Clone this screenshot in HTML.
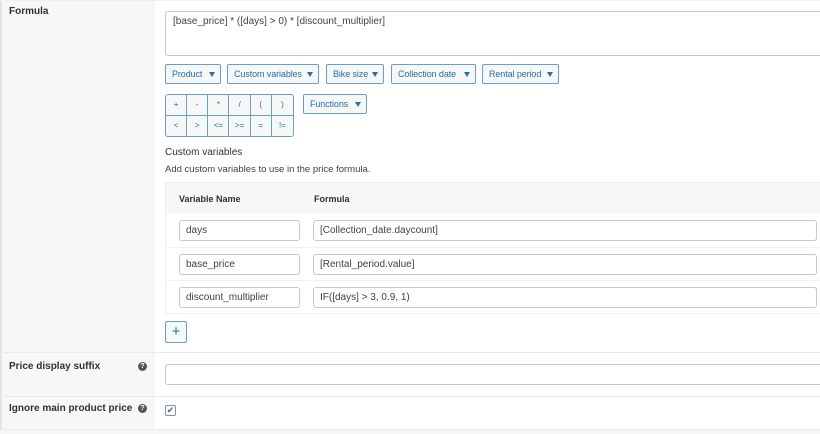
<!DOCTYPE html>
<html><head><style>
*{box-sizing:border-box;margin:0;padding:0}
body{width:820px;height:434px;overflow:hidden;background:#fff;font-family:"Liberation Sans",sans-serif;font-size:10px;color:#3c434a;position:relative}
.a{position:absolute}
.left{left:0;top:0;width:155px;height:434px;background:#f7f7f8;border-left:2px solid #e4e4e4}
.hl{height:1px;background:#ebebeb}
.lbl{font-weight:bold;font-size:10px;color:#2c3338}
.ta{border:1px solid #c8c8c8;border-radius:3px;background:#fff;padding:4px 7px;color:#3c434a}
.in{height:21px;line-height:19px;padding:0 6px}
.btn{border:1px solid #6b9fc8;border-radius:2px;color:#2271b1;background:#f6f7f7;height:20px;line-height:18px;padding-left:6px;font-size:9px;letter-spacing:-0.1px}
.btn:after{content:"";position:absolute;right:5px;top:7px;border-left:3.5px solid transparent;border-right:3.5px solid transparent;border-top:5px solid #2271b1}
.op{border:1px solid #6b9fc8;background:#f6f7f7;color:#2271b1;text-align:center;line-height:20px;font-size:8px}
.q{width:9px;height:9px;border-radius:50%;background:#555;color:#fff;font-size:7px;font-weight:bold;text-align:center;line-height:9px}
</style></head><body>
<div class="a left"></div>
<div class="a hl" style="left:0;top:0;width:820px;background:#f0f0f0"></div>
<div class="a lbl" style="left:9px;top:6px">Formula</div>
<div class="a ta" style="left:165px;top:11px;width:660px;height:45px">[base_price] * ([days] &gt; 0) * [discount_multiplier]</div>

<div class="a btn" style="left:165px;top:64px;width:56px">Product</div>
<div class="a btn" style="left:227px;top:64px;width:92px">Custom variables</div>
<div class="a btn" style="left:326px;top:64px;width:58px">Bike size</div>
<div class="a btn" style="left:391px;top:64px;width:85px">Collection date</div>
<div class="a btn" style="left:482px;top:64px;width:77px">Rental period</div>

<div class="a" style="left:165px;top:94px;width:129px;height:43px;border:1px solid #6b9fc8;border-radius:3px;overflow:hidden;background:#f6f7f7">
<div style="display:grid;grid-template-columns:repeat(6,1fr);grid-template-rows:21px 21px">
<div class="op" style="border-width:0 1px 1px 0">+</div><div class="op" style="border-width:0 1px 1px 0">-</div><div class="op" style="border-width:0 1px 1px 0">*</div><div class="op" style="border-width:0 1px 1px 0">/</div><div class="op" style="border-width:0 1px 1px 0">(</div><div class="op" style="border-width:0 0 1px 0">)</div>
<div class="op" style="border-width:0 1px 0 0">&lt;</div><div class="op" style="border-width:0 1px 0 0">&gt;</div><div class="op" style="border-width:0 1px 0 0">&lt;=</div><div class="op" style="border-width:0 1px 0 0">&gt;=</div><div class="op" style="border-width:0 1px 0 0">=</div><div class="op" style="border-width:0">!=</div>
</div></div>
<div class="a btn" style="left:303px;top:94px;width:64px">Functions</div>

<div class="a" style="left:165px;top:147px;font-size:10px;color:#2c3338">Custom variables</div>
<div class="a" style="left:165px;top:164px;font-size:9.5px">Add custom variables to use in the price formula.</div>

<div class="a" style="left:165px;top:182px;width:660px;height:132px;border:1px solid #f0f0f0;background:#fff"></div>
<div class="a" style="left:166px;top:183px;width:660px;height:31px;background:#f6f7f7"></div>
<div class="a lbl" style="left:179px;top:194px;font-size:9px">Variable Name</div>
<div class="a lbl" style="left:314px;top:194px;font-size:9px">Formula</div>
<div class="a hl" style="left:166px;top:247px;width:660px;background:#f0f0f0"></div>
<div class="a hl" style="left:166px;top:280px;width:660px;background:#f0f0f0"></div>

<div class="a ta in" style="left:179px;top:220px;width:121px">days</div>
<div class="a ta in" style="left:313px;top:220px;width:504px">[Collection_date.daycount]</div>
<div class="a ta in" style="left:179px;top:254px;width:121px">base_price</div>
<div class="a ta in" style="left:313px;top:254px;width:504px">[Rental_period.value]</div>
<div class="a ta in" style="left:179px;top:287px;width:121px">discount_multiplier</div>
<div class="a ta in" style="left:313px;top:287px;width:504px">IF([days] &gt; 3, 0.9, 1)</div>

<div class="a" style="left:165px;top:321px;width:22px;height:22px;border:1px solid #6b9fc8;border-radius:2px;background:#f6f7f7;color:#2271b1;text-align:center;line-height:19px;font-size:15px">+</div>

<div class="a hl" style="left:0;top:352px;width:820px"></div>
<div class="a lbl" style="left:9px;top:361px">Price display suffix</div>
<div class="a q" style="left:138px;top:362px">?</div>
<div class="a ta" style="left:165px;top:364px;width:660px;height:21px"></div>
<div class="a hl" style="left:0;top:396px;width:820px"></div>
<div class="a lbl" style="left:9px;top:403px">Ignore main product price</div>
<div class="a q" style="left:138px;top:404px">?</div>
<div class="a" style="left:165px;top:405px;width:11px;height:11px;border:1px solid #8c8f94;border-radius:2px;background:#fff;color:#2271b1;font-size:9px;line-height:9px;text-align:center">✔</div>
<div class="a" style="left:0;top:429px;width:820px;height:5px;background:#f7f7f8;border-top:1px solid #ebebeb"></div>
</body></html>
